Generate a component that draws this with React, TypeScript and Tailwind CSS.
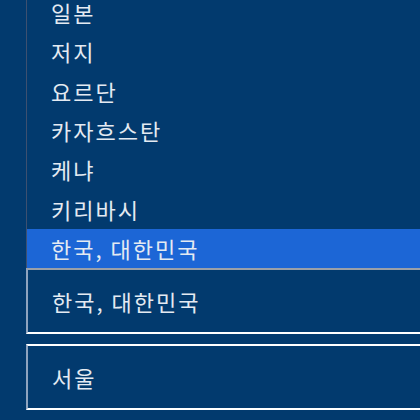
const countries = ["일본", "저지", "요르단", "카자흐스탄", "케냐", "키리바시", "한국, 대한민국"];

export default function App() {
  const selected = "한국, 대한민국";

  return (
    <div
      className="w-[420px] h-[420px] overflow-hidden bg-[#023a6e] text-[#e4eaf2] text-[22px] tracking-[2px]"
      style={{ fontFamily: '"Noto Sans CJK KR", "Noto Sans", sans-serif' }}
    >
      <div className="flex flex-col pl-[26px] -mt-[7.3px]">
        {/* open dropdown list */}
        <ul className="flex flex-col border-l border-[#3d5070] w-[440px]">
          {countries.map((c) => (
            <li
              key={c}
              className={
                c === selected
                  ? "h-[39.33px] flex items-center pl-[24px] bg-[#1c66d6]"
                  : "h-[39.33px] flex items-center pl-[24px]"
              }
            >
              {c}
            </li>
          ))}
        </ul>

        {/* country select */}
        <div className="h-[66px] w-[440px] flex items-center pl-[24px] border-t-2 border-t-[#9aa0a8] border-b-2 border-b-white border-l-2 border-l-[#8ea3bf]">
          {selected}
        </div>

        {/* city field */}
        <div className="mt-[10px] h-[66px] w-[440px] flex items-center pl-[24px] border-t-2 border-t-white border-b-2 border-b-white border-l-2 border-l-[#8ea3bf]">
          서울
        </div>
      </div>
    </div>
  );
}
